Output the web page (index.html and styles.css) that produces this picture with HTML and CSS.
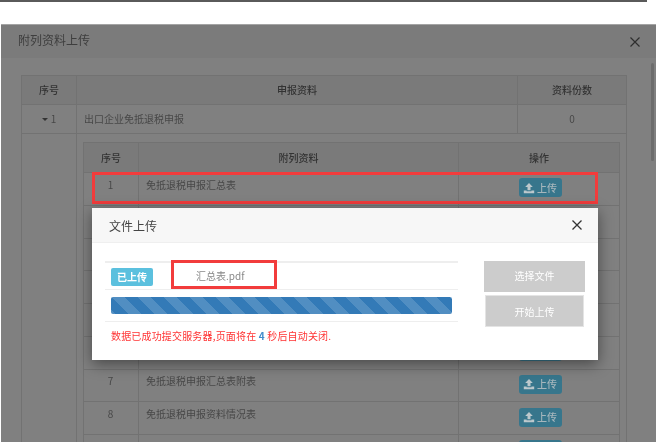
FILE: index.html
```html
<!DOCTYPE html>
<html lang="zh-CN">
<head>
<meta charset="utf-8">
<title>附列资料上传</title>
<link rel="stylesheet" href="styles.css">
</head>
<body>
<svg class="sprite" width="0" height="0" aria-hidden="true">
  <symbol id="upload" viewBox="0 0 12 12"><path d="M6 1 9.8 5H7.5V8.2H4.5V5H2.2ZM.8 8.4H3.6V9.2H8.4V8.4H11.2V11.2H.8Z"/></symbol>
</svg>
<div class="page">
  <div class="topline"></div>
  <section class="dialog">
    <header class="dialog-head">
      <h1 class="dialog-title">附列资料上传</h1>
      <svg class="close" viewBox="0 0 10 10"><path d="M.5.5 9.5 9.5M9.5.5.5 9.5"/></svg>
    </header>
    <div class="dialog-body">
      <table class="tbl outer">
        <colgroup><col class="c-o1"><col class="c-o2"><col class="c-o3"></colgroup>
        <tr class="r-h1"><th>序号</th><th>申报资料</th><th>资料份数</th></tr>
        <tr class="r-h1"><td><span class="caret"></span> 1</td><td class="left">出口企业免抵退税申报</td><td>0</td></tr>
        <tr>
          <td></td>
          <td colspan="2" class="nest-cell">
            <table class="tbl inner">
              <colgroup><col class="c-i1"><col class="c-i2"><col class="c-i3"></colgroup>
              <tr class="r-h2"><th>序号</th><th>附列资料</th><th>操作</th></tr>
              <tr class="r-b"><td>1</td><td class="left">免抵退税申报汇总表</td><td><button class="up"><svg class="ico"><use href="#upload"/></svg>上传</button></td></tr>
              <tr class="r-b"><td></td><td></td><td></td></tr>
              <tr class="r-b"><td></td><td></td><td></td></tr>
              <tr class="r-b"><td></td><td></td><td></td></tr>
              <tr class="r-b"><td></td><td></td><td></td></tr>
              <tr class="r-b"><td></td><td></td><td><button class="up" aria-label="上传"></button></td></tr>
              <tr class="r-b"><td>7</td><td class="left">免抵退税申报汇总表附表</td><td><button class="up"><svg class="ico"><use href="#upload"/></svg>上传</button></td></tr>
              <tr class="r-b"><td>8</td><td class="left">免抵退税申报资料情况表</td><td><button class="up"><svg class="ico"><use href="#upload"/></svg>上传</button></td></tr>
              <tr class="r-b"><td></td><td></td><td><button class="up" aria-label="上传"></button></td></tr>
            </table>
          </td>
        </tr>
      </table>
    </div>
    <div class="scrollbar"></div>
  </section>

  <div class="mark mark-row"></div>

  <section class="modal">
    <header class="modal-head">
      <h2 class="modal-title">文件上传</h2>
      <svg class="modal-close" viewBox="0 0 10 10"><path d="M.5.5 9.5 9.5M9.5.5.5 9.5"/></svg>
    </header>
    <div class="modal-body">
      <div class="main">
        <div class="file-row"><span class="badge">已上传</span><span class="fname">汇总表.pdf</span></div>
        <div class="bar-row"><div class="bar"></div></div>
        <p class="msg">数据已成功提交服务器,页面将在 <b class="count">4</b> 秒后自动关闭.</p>
      </div>
      <div class="actions">
        <button class="act act-a">选择文件</button>
        <button class="act act-b">开始上传</button>
      </div>
    </div>
    <div class="mark mark-file"></div>
  </section>
</div>
</body>
</html>
```
FILE: styles.css
```css
* { box-sizing: border-box; }
html, body { margin: 0; padding: 0; background: #fff; }
body { width: 656px; height: 442px; overflow: hidden; font-family: "Noto Sans CJK SC", "Liberation Sans", sans-serif; font-size: 10px; color: #3a3a3a; }
.sprite { position: absolute; }
.page { position: relative; width: 656px; height: 442px; overflow: hidden; filter: blur(0.5px); }
.topline { width: 647px; height: 2px; background: #5a5a5a; }
.dialog { position: relative; margin: 22px 0 0 1px; height: 430px; background: #808080; border-top: 1px solid #a4a4a4; }
.dialog-head { height: 33px; padding: 0 18px 4px 17px; display: flex; align-items: center; justify-content: space-between; background: #7b7b7b; }
.dialog-title { margin: 0; font-size: 12px; font-weight: 400; color: #3e3e3e; }
.close { width: 10px; height: 10px; margin-right: -2px; margin-top: 4px; }
.close path { fill: none; stroke: #2e2e2e; stroke-width: 1.2; }
.dialog-body { padding: 17px 28px 0 20px; }
.tbl { border-collapse: collapse; table-layout: fixed; width: 100%; }
.tbl th, .tbl td { border: 1px solid #727272; padding: 0; text-align: center; vertical-align: middle; font-size: 10px; line-height: 14px; color: #3a3a3a; }
.tbl th { background: #7a7a7a; font-weight: 500; color: #333; }
.tbl td { color: #474747; }
.tbl td.left { text-align: left; padding-left: 7px; }
.outer { width: 606px; }
.c-o1 { width: 55px; }
.c-o3 { width: 109px; }
.r-h1 { height: 29px; }
.tbl td.nest-cell { padding: 8px 6px 0 6px; vertical-align: top; }
.inner { width: 537px; }
.c-i1 { width: 55px; }
.c-i3 { width: 161px; }
.r-h2 { height: 30px; }
.r-b { height: 32.75px; }
.r-b td { padding-bottom: 8px; }
.r-b td:first-child { padding-right: 1px; }
.r-b td:last-child { padding: 0 0 2px 2px; }
.caret { display: inline-block; width: 0; height: 0; margin-right: 1px; vertical-align: 2px; border: 3px solid transparent; border-top: 3px solid #333; border-bottom: 0; }
.up { display: inline-flex; align-items: center; justify-content: center; gap: 2px; width: 43px; height: 19px; padding: 0; border: 0; border-radius: 3px; background: #37768c; color: #a5b6bc; font: 500 10px/1 "Noto Sans CJK SC", sans-serif; vertical-align: middle; }
.ico { width: 12px; height: 12px; fill: #bcc8cc; }
.scrollbar { position: absolute; top: 38px; right: 2px; width: 3px; height: 98px; border-radius: 2px; background: #6c6c6c; }
.mark { position: absolute; border: 3px solid #f23c3c; }
.mark-row { left: 92px; top: 172px; width: 506px; height: 32px; }
.modal { position: absolute; left: 92px; top: 208px; width: 506px; height: 152px; background: #fff; box-shadow: 0 4px 14px rgba(0,0,0,.45); }
.modal-head { height: 35px; padding: 0 16px 0 17px; display: flex; align-items: center; justify-content: space-between; background: #f7f7f7; border-bottom: 1px solid #efefef; }
.modal-title { margin: 0; font-size: 12px; font-weight: 400; color: #444; }
.modal-close { width: 10px; height: 10px; }
.modal-close path { fill: none; stroke: #333; stroke-width: 1.3; }
.modal-body { display: flex; padding: 18px 13px 0 13px; justify-content: space-between; }
.main { width: 353px; }
.file-row { height: 29px; display: flex; align-items: center; padding-left: 6px; border-top: 2px solid #eee; border-bottom: 1px solid #eee; }
.badge { width: 42px; height: 18px; margin-top: 1px; display: flex; align-items: center; justify-content: center; border-radius: 2px; background: #5bc0de; color: #fff; font-size: 10px; font-weight: 700; }
.fname { margin: -1px 0 0 43px; font-size: 10px; color: #888; font-family: "Noto Sans CJK SC", "Open Sans", sans-serif; }
.bar-row { height: 32px; padding: 7px 6px 0 6px; border-bottom: 1px solid #eee; }
.bar { height: 17px; border-radius: 2px; background-color: #337ab7; background-image: linear-gradient(45deg, rgba(255,255,255,.15) 25%, transparent 25%, transparent 50%, rgba(255,255,255,.15) 50%, rgba(255,255,255,.15) 75%, transparent 75%); background-size: 26px 26px; }
.msg { margin: 7px 0 0 6px; font-size: 10px; line-height: 14px; color: #f33; letter-spacing: .17px; }
.count { color: #428bca; font-weight: 700; }
.actions { width: 101px; display: flex; flex-direction: column; align-items: center; gap: 3px; }
.act { border: 0; padding: 0 0 2px; background: #ccc; color: #fff; font: 400 10px/1 "Noto Sans CJK SC", sans-serif; }
.act-a { width: 101px; height: 31px; }
.act-b { width: 99px; height: 32px; padding: 2px 0 0; border: 1px solid #e4e4e4; }
.mark-file { left: 79px; top: 52px; width: 106px; height: 29px; }
```
